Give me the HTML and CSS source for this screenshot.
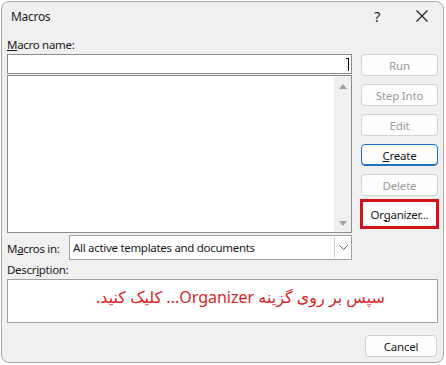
FILE: index.html
```html
<!DOCTYPE html>
<html lang="en">
<head>
  <meta charset="UTF-8">
  <meta name="viewport" content="width=device-width, initial-scale=1.0">
  <title>Macros</title>
  <link rel="stylesheet" href="styles.css">
</head>
<body>
  <div class="window">
    <!-- Title bar -->
    <div class="titlebar">
      <span class="title">Macros</span>
      <span class="help">?</span>
      <svg class="close" width="12" height="12" viewBox="0 0 12 12">
        <path d="M0.5 0.5 L11.5 11.5 M11.5 0.5 L0.5 11.5" stroke="#1a1a1a" stroke-width="1.1" fill="none"/>
      </svg>
    </div>

    <div class="content">
      <div class="main">
        <div class="left">
          <div class="label"><u>M</u>acro name:</div>
          <div class="name-input"><span class="caret"></span></div>
          <div class="list">
            <div class="scrollbar">
              <span class="arrow-up"></span>
              <span class="arrow-down"></span>
            </div>
          </div>
          <div class="macros-in">
            <span class="label">M<u>a</u>cros in:</span>
            <div class="select">
              <span class="select-text">All active templates and documents</span>
              <span class="select-btn">
                <svg width="9" height="5" viewBox="0 0 9 5">
                  <path d="M0.5 0.5 L4.5 4.5 L8.5 0.5" stroke="#555" stroke-width="1" fill="none"/>
                </svg>
              </span>
            </div>
          </div>
        </div>

        <div class="buttons">
          <button class="btn disabled">Run</button>
          <button class="btn disabled">Step Into</button>
          <button class="btn disabled">Edit</button>
          <button class="btn default"><u>C</u>reate</button>
          <button class="btn disabled">Delete</button>
          <div class="highlight">Or<u>g</u>anizer...</div>
        </div>
      </div>

      <div class="label desc-label">Descr<u>i</u>ption:</div>
      <div class="description" dir="rtl">سپس بر روی گزینه <bdi dir="ltr">...Organizer</bdi> کلیک کنید.</div>

      <div class="footer">
        <button class="btn cancel">Cancel</button>
      </div>
    </div>
  </div>
</body>
</html>
```

FILE: styles.css
```css
body {
  margin: 0;
  background: #fff;
  font-family: "Noto Sans", "DejaVu Sans", sans-serif;
  font-size: 11.5px;
  letter-spacing: -0.3px;
  color: #1a1a1a;
}

.window {
  margin: 1px 0 0 1px;
  width: 441px;
  height: 360px;
  border: 1px solid #a8a8a8;
  border-radius: 8px;
  background: #f0f0f0;
}

.titlebar {
  height: 28px;
  display: flex;
  align-items: center;
  padding-left: 9px;
}

.title {
  flex: 1;
  font-size: 12px;
}

.help {
  font-size: 14px;
  margin-right: 36px;
}

.close {
  margin-right: 15px;
}

.content {
  padding: 0 5px;
}

.main {
  display: flex;
  gap: 9px;
}

.left {
  width: 345px;
}

.label {
  line-height: 14px;
}

.left > .label {
  margin-top: 8px;
  margin-bottom: 2px;
}

.name-input {
  height: 18px;
  border: 1px solid #8c8c8c;
  background: #fff;
  display: flex;
  justify-content: flex-end;
  align-items: center;
}

.caret {
  width: 3px;
  height: 13px;
  border-top: 1px solid #000;
  border-right: 1px solid #000;
  box-sizing: border-box;
  margin-right: 2px;
}

.list {
  margin-top: 1px;
  height: 156px;
  border: 1px solid #8c8c8c;
  background: #fff;
  display: flex;
  justify-content: flex-end;
}

.scrollbar {
  width: 17px;
  background: #f0f0f0;
  display: flex;
  flex-direction: column;
  justify-content: space-between;
  align-items: center;
  padding: 8px 0 6px;
}

.arrow-up, .arrow-down {
  width: 0;
  height: 0;
  border-left: 4px solid transparent;
  border-right: 4px solid transparent;
}

.arrow-up {
  border-bottom: 5px solid #a3a3a3;
}

.arrow-down {
  border-top: 5px solid #a3a3a3;
}

.macros-in {
  display: flex;
  align-items: center;
  margin-top: 2px;
}

.macros-in .label {
  width: 62px;
  margin-top: 2px;
}

.select {
  flex: 1;
  height: 23px;
  border: 1px solid #a0a0a0;
  background: #fff;
  display: flex;
  align-items: center;
}

.select-text {
  flex: 1;
  padding-left: 3px;
}

.select-btn {
  width: 16px;
  height: 21px;
  border-left: 1px solid #d0d0d0;
  display: flex;
  align-items: center;
  justify-content: center;
}

.buttons {
  width: 77px;
  padding-top: 24px;
  display: flex;
  flex-direction: column;
  gap: 8px;
}

.btn {
  height: 22px;
  border: 1px solid #d2d2d2;
  border-radius: 4px;
  background: #fdfdfd;
  font-family: inherit;
  font-size: 11.5px;
  letter-spacing: -0.2px;
  color: #1a1a1a;
  padding: 0;
}

.btn.disabled {
  color: #9b9b9b;
}

.btn.default {
  border-color: #1a6fbf;
  box-shadow: inset 0 -1px 0 #1a6fbf;
}

.highlight {
  margin: -5px -1px 0;
  height: 30px;
  border: 3px solid #d4121c;
  box-sizing: border-box;
  background: #fff;
  display: flex;
  align-items: center;
  justify-content: center;
}

.desc-label {
  margin-top: 3px;
}

.description {
  margin-top: 2px;
  height: 44px;
  border: 1px solid #a0a0a0;
  background: #fff;
  color: #dc1f26;
  font-size: 16px;
  letter-spacing: 0;
  line-height: 20px;
  padding: 7px 52px 0 0;
  box-sizing: border-box;
}

.footer {
  display: flex;
  justify-content: flex-end;
  margin-top: 12px;
  padding-right: 1px;
}

.btn.cancel {
  width: 72px;
}
```
